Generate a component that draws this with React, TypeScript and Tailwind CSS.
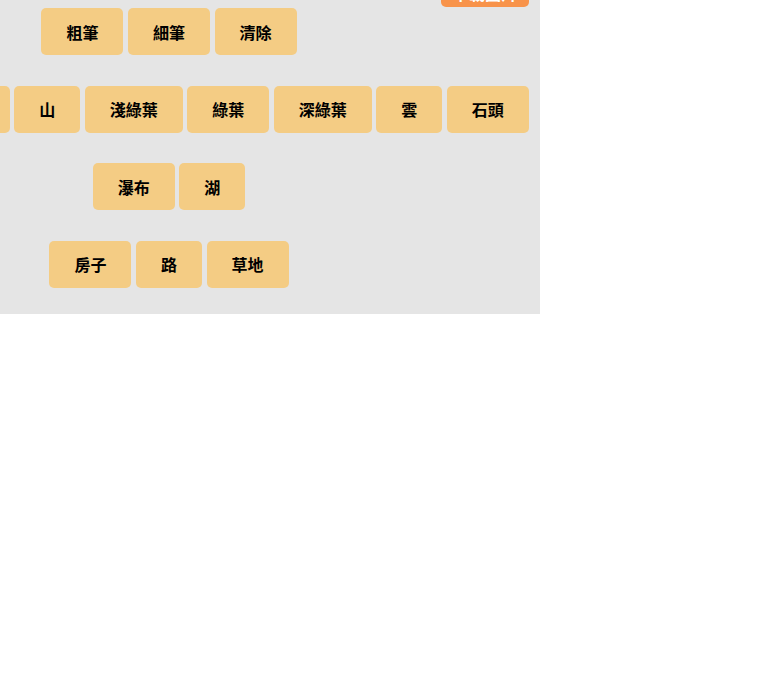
const rows: string[][] = [
  ['粗筆', '細筆', '清除'],
  ['花草叢', '小樹林', '山', '淺綠葉', '綠葉', '深綠葉', '雲', '石頭'],
  ['瀑布', '湖'],
  ['房子', '路', '草地'],
];

const Tool = ({ label }: { label: string }) => (
  <button className="h-[47px] shrink-0 rounded-[5px] bg-[#f4cc84] px-[25px] text-[16px] font-bold leading-none text-black">
    {label}
  </button>
);

export default function App() {
  return (
    <div
      className="h-[314px] w-[540px] overflow-hidden bg-[#e5e5e5]"
      style={{ fontFamily: '"Noto Sans CJK TC", "Noto Sans CJK SC", sans-serif' }}
    >
      <div className="-ml-[191px] -mt-[21px] flex w-[720px] flex-col">
        <div className="flex justify-end">
          <button className="h-[28px] w-[88px] rounded-[5px] bg-[#f8934a] text-[16px] font-bold leading-none text-white">
            下載圖片
          </button>
        </div>
        <div className="mt-px flex flex-col gap-[30.67px]">
          {rows.map((row, i) => (
            <div key={i} className="flex justify-center gap-[4.5px]">
              {row.map((label) => (
                <Tool key={label} label={label} />
              ))}
            </div>
          ))}
        </div>
      </div>
    </div>
  );
}
